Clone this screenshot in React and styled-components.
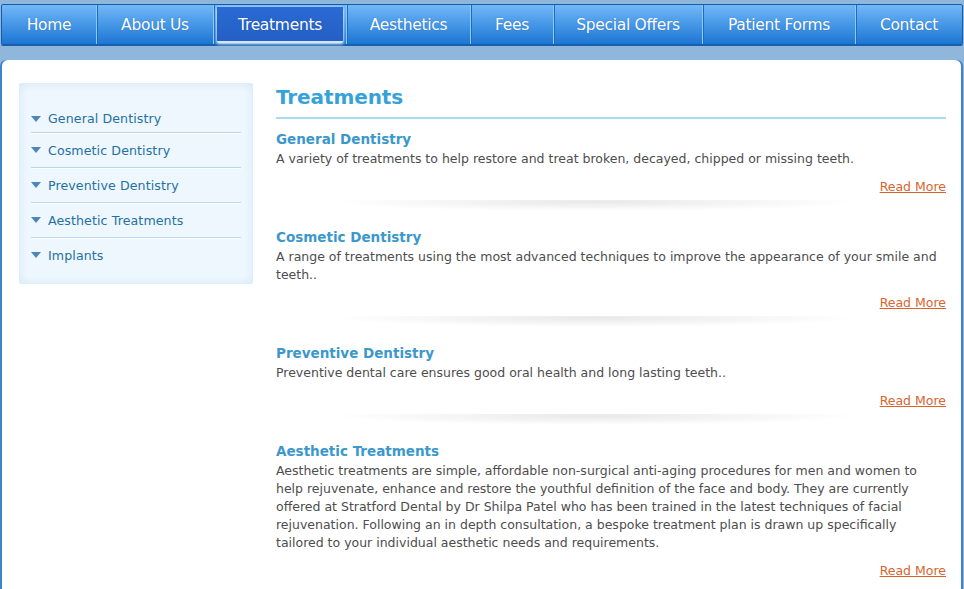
import styled, { createGlobalStyle } from "styled-components";

const GlobalStyle = createGlobalStyle`
  html, body {
    margin: 0;
    padding: 0;
    background: #8fb7db;
    font-family: "DejaVu Sans", Verdana, sans-serif;
  }
`;

const Page = styled.div`
  width: 964px;
  height: 589px;
  overflow: hidden;
  padding-top: 4px;
  box-sizing: border-box;
`;

const NavBar = styled.ul`
  display: flex;
  list-style: none;
  margin: 0 1px;
  padding: 0;
  height: 41px;
  border: 1px solid #1a5aa6;
  border-radius: 2px;
  box-sizing: border-box;
  background: linear-gradient(#72b8f7 0%, #4a9ae8 45%, #1c76d2 100%);
  box-shadow: 0 1px 0 #1761b5;
`;

const NavItem = styled.li`
  width: ${({ $w }) => ($w ? `${$w}px` : "auto")};
  flex: ${({ $w }) => ($w ? "none" : "1")};
  box-sizing: border-box;
  display: flex;
  align-items: center;
  justify-content: center;
  padding-top: 1px;
  color: #fff;
  font-family: "DejaVu Sans", Verdana, sans-serif;
  font-size: 15.5px;
  letter-spacing: -0.3px;
  border-left: ${({ $first }) => ($first ? "none" : "1px solid #8ccaf8")};
  box-shadow: ${({ $first }) => ($first ? "none" : "inset 1px 0 0 #1e6ac4")};
  position: relative;
  text-shadow: 0 0 1px rgba(0, 40, 120, 0.4);

  ${({ $active }) =>
    $active &&
    `
    &::before {
      content: "";
      position: absolute;
      left: 3px;
      right: 3px;
      top: 2px;
      bottom: 2px;
      background: linear-gradient(#2a6ad4, #245fc4);
      box-shadow: 0 2px 3px rgba(255,255,255,0.9), 0 0 2px rgba(255,255,255,0.6);
      border-bottom: 1px solid #cfe8ff;
    }
  `}
`;

const NavLabel = styled.span`
  position: relative;
`;

const Panel = styled.div`
  margin: 15px 3px 0 2px;
  background: #fff;
  border-radius: 6px 6px 0 0;
  height: 540px;
  display: flex;
  gap: 23px;
  padding: 23px 15px 0 17px;
  box-sizing: border-box;
  box-shadow: -2px 0 0 #3d84cc, 2px 0 0 #3d84cc;
`;

const Sidebar = styled.ul`
  list-style: none;
  margin: 0;
  width: 234px;
  height: 201px;
  flex-shrink: 0;
  box-sizing: border-box;
  padding: 26px 12px 0 12px;
  background: #eef7fe;
  border-radius: 3px;
  box-shadow: inset 0 0 10px #cfe6f6;
`;

const SideItem = styled.li`
  display: flex;
  align-items: center;
  gap: 7px;
  margin-top: ${({ $first }) => ($first ? "-4px" : "0")};
  height: ${({ $first }) => ($first ? "27px" : "34px")};
  border-bottom: ${({ $last }) => ($last ? "none" : "1px solid #b9d7ec")};
  box-shadow: ${({ $last }) => ($last ? "none" : "0 1px 0 #fff")};
  color: #2570a3;
  font-family: "DejaVu Sans", Verdana, sans-serif;
  font-size: 12.6px;
  letter-spacing: 0.1px;
`;

const Arrow = styled.span`
  width: 0;
  height: 0;
  border-left: 5.5px solid transparent;
  border-right: 5.5px solid transparent;
  border-top: 6px solid #4f86b9;
`;

const Content = styled.div`
  flex: 1;
`;

const Title = styled.h1`
  margin: 0;
  font-family: "DejaVu Sans", Tahoma, sans-serif;
  font-size: 20px;
  font-weight: bold;
  color: #36a2d8;
  padding: 2px 0 8px;
  border-bottom: 2px solid #a9dcf2;
  letter-spacing: -0.1px;
`;

const Section = styled.div`
  padding-top: 10px;
`;

const SectionTitle = styled.h2`
  margin: 0;
  font-family: "DejaVu Sans", Tahoma, sans-serif;
  font-size: 13.5px;
  font-weight: bold;
  color: #3b98cc;
  line-height: 21px;
`;

const Text = styled.p`
  margin: 0;
  font-family: "DejaVu Sans", Tahoma, sans-serif;
  font-size: 12.5px;
  line-height: 18px;
  color: #4d4d4d;
`;

const ReadMore = styled.a`
  display: block;
  text-align: right;
  margin-top: 10px;
  font-family: "DejaVu Sans", Tahoma, sans-serif;
  font-size: 12.5px;
  line-height: 18px;
  color: #d8652e;
  text-decoration: underline;
`;

const Shadow = styled.div`
  height: 17px;
  margin: 4px 85px 0 55px;
  background: radial-gradient(ellipse 50% 9px at 50% 2px, rgba(0, 0, 0, 0.09), rgba(0, 0, 0, 0) 100%);
`;

const navItems = [
  ["Home", 94],
  ["About Us", 117],
  ["Treatments", 133],
  ["Aesthetics", 124],
  ["Fees", 83],
  ["Special Offers", 149],
  ["Patient Forms", 153],
  ["Contact", 0],
];

const sideItems = [
  "General Dentistry",
  "Cosmetic Dentistry",
  "Preventive Dentistry",
  "Aesthetic Treatments",
  "Implants",
];

const sections = [
  {
    title: "General Dentistry",
    text: "A variety of treatments to help restore and treat broken, decayed, chipped or missing teeth.",
  },
  {
    title: "Cosmetic Dentistry",
    text: "A range of treatments using the most advanced techniques to improve the appearance of your smile and teeth..",
  },
  {
    title: "Preventive Dentistry",
    text: "Preventive dental care ensures good oral health and long lasting teeth..",
  },
  {
    title: "Aesthetic Treatments",
    text: "Aesthetic treatments are simple, affordable non-surgical anti-aging procedures for men and women to help rejuvenate, enhance and restore the youthful definition of the face and body. They are currently offered at Stratford Dental by Dr Shilpa Patel who has been trained in the latest techniques of facial rejuvenation. Following an in depth consultation, a bespoke treatment plan is drawn up specifically tailored to your individual aesthetic needs and requirements.",
  },
];

export default function App() {
  return (
    <>
      <GlobalStyle />
      <Page>
        <NavBar>
          {navItems.map(([label, w], i) => (
            <NavItem key={label} $w={w} $first={i === 0} $active={label === "Treatments"}>
              <NavLabel>{label}</NavLabel>
            </NavItem>
          ))}
        </NavBar>
        <Panel>
          <Sidebar>
            {sideItems.map((item, i) => (
              <SideItem key={item} $first={i === 0} $last={i === sideItems.length - 1}>
                <Arrow />
                {item}
              </SideItem>
            ))}
          </Sidebar>
          <Content>
            <Title>Treatments</Title>
            {sections.map((s, i) => (
              <Section key={s.title}>
                <SectionTitle>{s.title}</SectionTitle>
                <Text>{s.text}</Text>
                <ReadMore href="#">Read More</ReadMore>
                {i < sections.length - 1 && <Shadow />}
              </Section>
            ))}
          </Content>
        </Panel>
      </Page>
    </>
  );
}
